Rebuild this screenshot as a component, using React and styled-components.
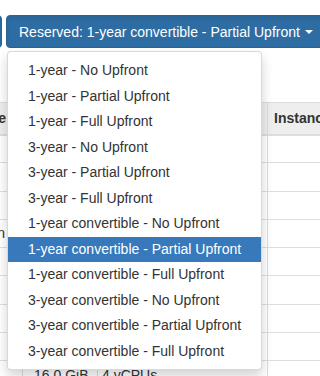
import React from "react";
import styled, { createGlobalStyle } from "styled-components";

const GlobalStyle = createGlobalStyle`
  html, body {
    margin: 0;
    padding: 0;
    background: #fff;
    overflow: hidden;
  }
  body {
    font-family: "Liberation Sans", Arial, Helvetica, sans-serif;
    font-size: 14px;
    color: #333;
  }
`;

const Viewport = styled.div`
  width: 320px;
  height: 376px;
  overflow: hidden;
`;

// the page is scrolled sideways, so the content starts left of the window
const Canvas = styled.div`
  margin-left: -100px;
  padding-top: 15px;
  width: 700px;
`;

const Toolbar = styled.div`
  display: flex;
  gap: 4px;
  align-items: flex-start;
`;

const ButtonWrap = styled.div`
  position: relative;
`;

const Button = styled.button`
  display: flex;
  align-items: center;
  height: 33px;
  width: ${({ width }) => (width ? `${width}px` : "auto")};
  padding: 0 12px;
  border: 1px solid #2a6496;
  border-radius: 4px;
  background: #2e6da4;
  color: #fff;
  font-family: inherit;
  font-size: 14px;
  line-height: 20px;
  white-space: nowrap;
  box-shadow: inset 0 3px 5px rgba(0, 0, 0, 0.08);
`;

const Caret = styled.span`
  display: inline-block;
  width: 0;
  height: 0;
  margin-left: 5px;
  border-top: 4px solid #fff;
  border-left: 4px solid transparent;
  border-right: 4px solid transparent;
`;

const Menu = styled.ul`
  position: absolute;
  top: calc(100% + 3px);
  left: 1px;
  z-index: 10;
  margin: 0;
  padding: 6px 0 5px;
  list-style: none;
  background: #fff;
  border: 1px solid rgba(0, 0, 0, 0.15);
  border-radius: 4px;
  box-shadow: 0 6px 12px rgba(0, 0, 0, 0.175);
  white-space: nowrap;
`;

const MenuItem = styled.li`
  padding: 3px 20px;
  line-height: 19.5px;
  color: ${({ active }) => (active ? "#fff" : "#333")};
  background: ${({ active }) => (active ? "#3779bb" : "transparent")};
`;

const Table = styled.table`
  margin-top: 54px;
  border-collapse: collapse;
  table-layout: fixed;
  width: 700px;
`;

const HeadCell = styled.th`
  width: ${({ width }) => width}px;
  height: 32px;
  padding: 0 ${({ pad }) => pad || 6}px;
  box-sizing: border-box;
  background: #eee;
  border-top: 1px solid #ddd;
  border-bottom: 2px solid #ddd;
  border-left: 1px solid #ddd;
  text-align: ${({ align }) => align || "left"};
  font-weight: bold;
  white-space: nowrap;
  overflow: hidden;
`;

const Cell = styled.td`
  height: 28.25px;
  padding: 0 ${({ pad }) => pad || 5}px;
  box-sizing: border-box;
  border-bottom: 1px solid #ddd;
  border-left: 1px solid #ddd;
  text-align: ${({ align }) => align || "left"};
  color: ${({ muted }) => (muted ? "#999" : "#333")};
  font-size: ${({ small }) => (small ? "9px" : "14px")};
  white-space: nowrap;
  overflow: hidden;
`;

const options = [
  "1-year - No Upfront",
  "1-year - Partial Upfront",
  "1-year - Full Upfront",
  "3-year - No Upfront",
  "3-year - Partial Upfront",
  "3-year - Full Upfront",
  "1-year convertible - No Upfront",
  "1-year convertible - Partial Upfront",
  "1-year convertible - Full Upfront",
  "3-year convertible - No Upfront",
  "3-year convertible - Partial Upfront",
  "3-year convertible - Full Upfront",
];

const rows = [
  { name: "", mem: "", cpu: "E" },
  { name: "", mem: "", cpu: "E" },
  { name: "", mem: "", cpu: "E" },
  { name: "Region", mem: "", cpu: "E" },
  { name: "", mem: "", cpu: "E" },
  { name: "", mem: "", cpu: "E" },
  { name: "", mem: "", cpu: "" },
  { name: "", mem: "", cpu: "" },
  { name: "", mem: "16.0 GiB", cpu: "4 vCPUs", plain: true },
];

export default function App() {
  const selected = "1-year convertible - Partial Upfront";

  return (
    <Viewport>
      <GlobalStyle />
      <Canvas>
        <Toolbar>
          <Button width={102} />
          <ButtonWrap>
            <Button>
              Reserved: {selected}
              <Caret />
            </Button>
            <Menu>
              {options.map((o) => (
                <MenuItem key={o} active={o === selected}>
                  {o}
                </MenuItem>
              ))}
            </Menu>
          </ButtonWrap>
        </Toolbar>

        <Table>
          <thead>
            <tr>
              <HeadCell width={122} align="right" pad={16}>
                Name
              </HeadCell>
              <HeadCell width={75} />
              <HeadCell width={170} />
              <HeadCell width={333}>Instance Storage</HeadCell>
            </tr>
          </thead>
          <tbody>
            {rows.map((r, i) => (
              <tr key={i}>
                <Cell align="right" pad={17}>
                  {r.name}
                </Cell>
                <Cell align="right" pad={11}>
                  {r.mem}
                </Cell>
                {r.plain ? (
                  <Cell pad={4}>{r.cpu}</Cell>
                ) : (
                  <Cell align="right" muted small pad={6}>
                    {r.cpu}
                  </Cell>
                )}
                <Cell />
              </tr>
            ))}
          </tbody>
        </Table>
      </Canvas>
    </Viewport>
  );
}
